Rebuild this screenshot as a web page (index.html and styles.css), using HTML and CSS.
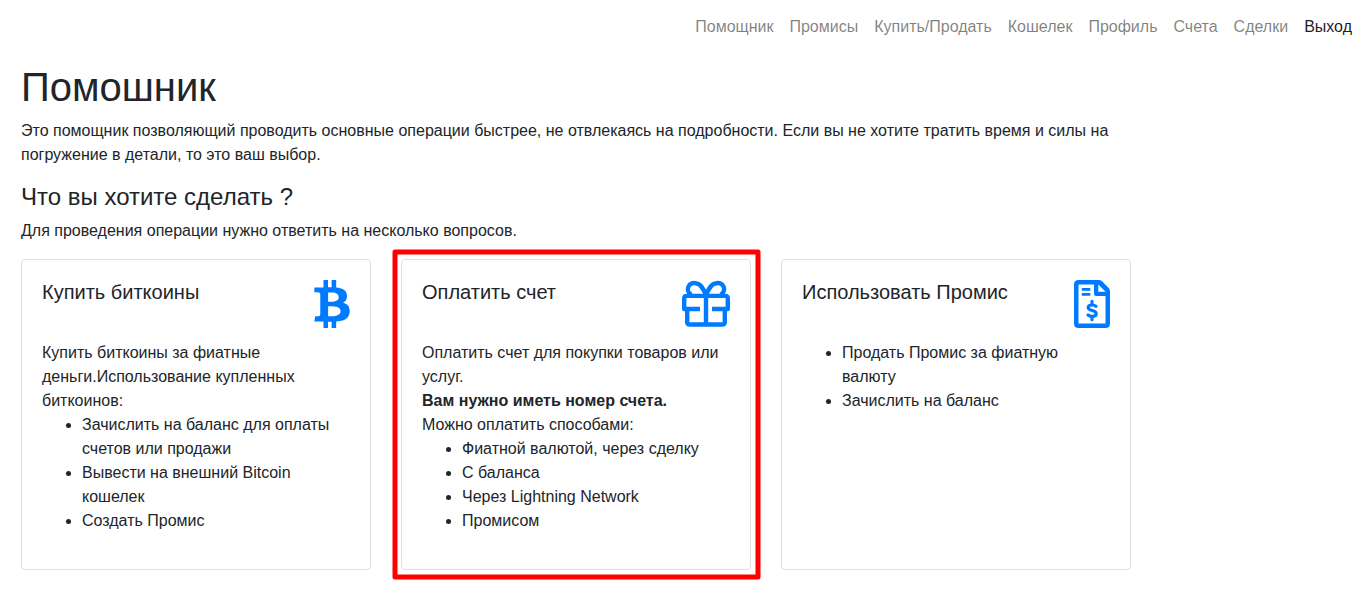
FILE: index.html
```html
<!DOCTYPE html>
<html lang="ru">
<head>
<meta charset="utf-8">
<title>Помощник</title>
<link rel="stylesheet" href="styles.css">
</head>
<body>
<nav class="navbar">
<a class="nav-link">Помощник</a><a class="nav-link">Промисы</a><a class="nav-link">Купить/Продать</a><a class="nav-link">Кошелек</a><a class="nav-link">Профиль</a><a class="nav-link">Счета</a><a class="nav-link">Сделки</a><a class="nav-link active">Выход</a>
</nav>
<main class="content">
<h1 class="title">Помошник</h1>
<p class="lead">Это помощник позволяющий проводить основные операции быстрее, не отвлекаясь на подробности. Если вы не хотите тратить время и силы на погружение в детали, то это ваш выбор.</p>
<h4 class="question">Что вы хотите сделать ?</h4>
<p class="hint">Для проведения операции нужно ответить на несколько вопросов.</p>
<div class="cards">
<section class="card">
<header class="card-head"><h5 class="card-title">Купить биткоины</h5>
<svg class="icon icon-btc" viewBox="0 0 384 512"><path d="M310.204 242.638c27.73-14.18 45.377-39.39 41.28-81.3-5.358-57.351-52.458-76.573-114.85-81.929V0h-48.528v77.203c-12.605 0-25.525.315-38.444.63V0h-48.53v79.409c-17.842.539-38.622.276-97.37 0v51.678c38.314-.678 58.417-3.14 63.023 21.427v217.429c-2.925 19.492-18.524 16.685-53.255 16.071L3.765 443.68c88.481 0 97.37.315 97.37.315V512h48.53v-67.06c13.234.315 26.154.315 38.444.315V512h48.528v-68.005c81.299-4.412 135.647-24.894 142.895-101.467 5.671-61.446-23.32-88.862-69.326-99.89zM150.608 134.553c27.415 0 113.126-8.507 113.126 48.528 0 54.515-85.71 48.212-113.126 48.212v-96.74zm0 251.776V279.821c32.772 0 133.127-9.138 133.127 53.255-.001 60.186-100.355 53.253-133.127 53.253z"/></svg></header>
<div class="card-text">Купить биткоины за фиатные деньги.Использование купленных биткоинов:
<ul class="list"><li>Зачислить на баланс для оплаты счетов или продажи</li><li>Вывести на внешний Bitcoin кошелек</li><li>Создать Промис</li></ul></div>
</section>
<section class="card">
<svg class="highlight" viewBox="0 0 370 332"><rect x="3" y="3" width="363" height="325"/></svg>
<header class="card-head"><h5 class="card-title">Оплатить счет</h5>
<svg class="icon icon-gift" viewBox="0 0 48 48"><path d="M18 29H2.200V18.500q0-2.600 2.600-2.600h38.400q2.600 0 2.600 2.600V29H30M5.200 29V41.900q0 2.600 2.600 2.600h32.400q2.600 0 2.600-2.600V29M24 16V44M24 14.500C21.500 9.500 18.500 3.500 14.500 3.500a5.900 5.900 0 0 0-5 11.200M24 14.500C26.500 9.500 29.500 3.500 33.500 3.500a5.900 5.900 0 0 1 5 11.200"/></svg></header>
<div class="card-text">Оплатить счет для покупки товаров или услуг.<br><b>Вам нужно иметь номер счета.</b><br>Можно оплатить способами:
<ul class="list"><li>Фиатной валютой, через сделку</li><li>С баланса</li><li>Через Lightning Network</li><li>Промисом</li></ul></div>
</section>
<section class="card">
<header class="card-head"><h5 class="card-title">Использовать Промис</h5>
<svg class="icon icon-invoice" viewBox="0 0 36 48"><path fill-rule="evenodd" d="M4.500 0h20.300q1.900 0 3.200 1.300l6.700 6.700Q36 9.300 36 11.200V43.500Q36 48 31.500 48h-27Q0 48 0 43.500v-39Q0 0 4.500 0zM4.500 5v38q0 .5.500.5h26q.5 0 .5-.5V16H22.200q-2.200 0-2.200-2.200V4.500H5q-.5 0-.5.500zM24.300 4.500V11.800h7.300z"/><path d="M8.300 8h7.500q.6 0 .6.600v1.600q0 .6-.6.600h-7.500q-.6 0-.6-.6v-1.600q0-.6.600-.6zm0 5h7.500q.6 0 .6.600v1.600q0 .6-.6.600h-7.500q-.6 0-.6-.6v-1.600q0-.6.600-.6z"/><path class="dollar" d="M22 26.300q-1.500-1.300-3.900-1.300-3.900 0-3.900 2.500 0 2 4 3 4 1 4 3.200 0 2.700-4.200 2.700-2.500 0-4-1.400M18 21.300v3M18 36.700v3"/></svg></header>
<div class="card-text"><ul class="list"><li>Продать Промис за фиатную валюту</li><li>Зачислить на баланс</li></ul></div>
</section>
</div>
</main>
</body>
</html>
```
FILE: styles.css
```css
*{box-sizing:border-box}
body{margin:0;min-height:600px;background:#fff;color:#212529;font:16px/24px "Liberation Sans",Arial,sans-serif}
h1,h4,h5,p{margin:0;font-weight:400}
.navbar{display:flex;justify-content:flex-end;gap:16px;height:56px;padding:15px 10px 0 0}
.nav-link{color:rgba(0,0,0,.5);white-space:nowrap}
.nav-link.active{color:rgba(0,0,0,.9)}
.content{width:1140px;padding:7px 15px 0 21px}
.title{font-size:40px;line-height:48px;margin-bottom:8px}
.lead{margin-bottom:16px}
.question{font-size:24px;line-height:28px;margin-bottom:8px}
.hint{margin-bottom:16px}
.cards{display:flex;gap:30px}
.card{position:relative;width:350px;height:311px;flex:none;padding:20px;border:1px solid rgba(0,0,0,.125);border-radius:4px}
.highlight{position:absolute;top:-11px;left:-10px;width:370px;height:332px;fill:none;stroke:#f00;stroke-width:5;stroke-linejoin:round;pointer-events:none}
.card-head{display:flex;justify-content:space-between;height:61px}
.card-title{font-size:20px;line-height:24px}
.icon{height:48px;fill:#007bff}
.icon-btc{width:36px}
.icon-gift{width:48px;fill:none;stroke:#007bff;stroke-width:4.400;stroke-linejoin:round}
.icon-invoice{width:36px}
.dollar{fill:none;stroke:#007bff;stroke-width:3.200;stroke-linecap:round}
.list{margin:0;padding-left:40px}
```
